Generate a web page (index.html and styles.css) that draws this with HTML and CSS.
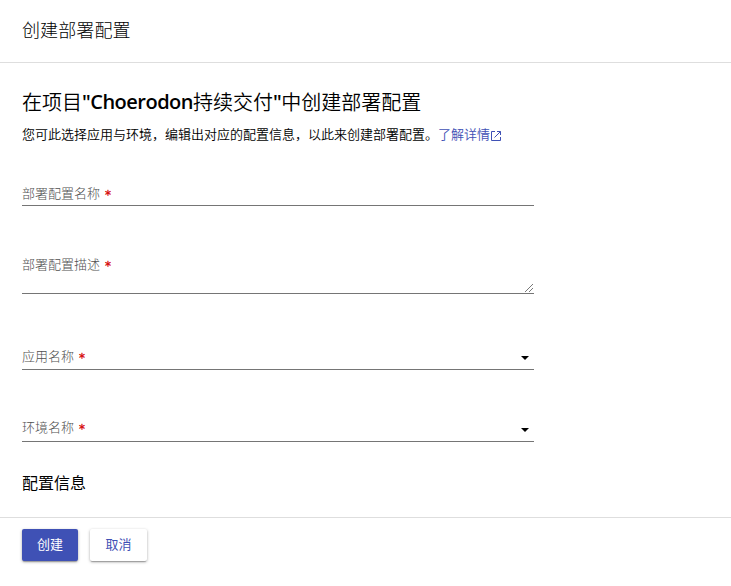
FILE: index.html
```html
<!DOCTYPE html>
<html lang="zh-CN">
<head>
<meta charset="utf-8">
<title>创建部署配置</title>
<link rel="stylesheet" href="styles.css">
</head>
<body>
<div class="drawer">
  <header class="header">创建部署配置</header>
  <main class="content">
    <h2 class="title"><span>在项目</span><span class="latin">"Choerodon</span><span>持续交付</span><span class="latin">"</span><span>中创建部署配置</span></h2>
    <p class="desc"><span>您可此选择应用与环境，编辑出对应的配置信息，以此来创建部署配置。</span><a class="link">了解详情<svg class="open" viewBox="0 0 12 12"><path d="M5 1.5H1.5v9h9V7M7 1.5h3.5V5M10.5 1.5L4.5 7.5"/></svg></a></p>
    <div class="field name"><span>部署配置名称</span><i class="star">*</i></div>
    <div class="field area"><span>部署配置描述</span><i class="star">*</i><svg class="grip" viewBox="0 0 10 10"><path d="M1 9L9 1M5 9l4-4"/></svg></div>
    <div class="field app"><span>应用名称</span><i class="star">*</i><i class="caret"></i></div>
    <div class="field env"><span>环境名称</span><i class="star">*</i><i class="caret"></i></div>
    <h3 class="section">配置信息</h3>
  </main>
  <footer class="footer"><button class="btn primary">创建</button><button class="btn">取消</button></footer>
</div>
</body>
</html>
```
FILE: styles.css
```css
* { box-sizing: border-box; }
body { margin: 0; background: #fff; color: #000; font: 13px/20px "Noto Sans CJK SC", sans-serif; }
.drawer { height: 586px; display: flex; flex-direction: column; overflow: hidden; white-space: nowrap; }
.header { height: 63px; padding: 0 22px; border-bottom: 1px solid #dedede; font-size: 18px; line-height: 59px; color: #000; font-weight: 300; letter-spacing: .1px; }
.content { flex: 1; padding: 25px 22px 0; }
.title { display: flex; margin: 0; height: 28px; font: 350 20px/28px "Noto Sans CJK SC", sans-serif; }
.latin { font-family: "Open Sans", sans-serif; font-weight: 600; letter-spacing: -.5px; }
.desc { display: flex; margin: 8px 0 0; height: 20px; font-weight: 350; }
.link { display: flex; align-items: center; color: #3f51b5; }
.open { width: 12px; height: 12px; margin-top: 3px; fill: none; stroke: #3f51b5; }
.field { display: flex; width: 512px; border-bottom: 1px solid #757575; color: #505050; font-weight: 300; }
.star { margin: 2px 0 0 5px; color: #d50000; font: 400 12px/20px "DejaVu Sans", sans-serif; -webkit-text-stroke: .3px #d50000; }
.name { height: 23px; margin-top: 39px; }
.area { height: 40px; margin-top: 48px; }
.app { height: 24px; margin-top: 52px; }
.env { height: 25px; margin-top: 47px; }
.grip { width: 10px; height: 10px; margin: auto 0 0 auto; fill: none; stroke: #555; stroke-width: .8; }
.caret { margin: 10px 5px 0 auto; width: 0; height: 0; border: 4px solid transparent; border-top-color: #000; border-bottom: 0; }
.env .caret { margin-top: 11px; }
.section { margin: 28px 0 0; font: 400 16px/24px "Noto Sans CJK SC", sans-serif; }
.footer { display: flex; gap: 12px; height: 69px; padding: 11px 22px; border-top: 1px solid #dedede; }
.btn { height: 32px; width: 57px; padding: 0 0 2px; border: 0; border-radius: 2px; background: #fff; color: #3f51b5; font: 400 13px/30px "Noto Sans CJK SC", sans-serif; box-shadow: 0 1px 3px rgba(0,0,0,.35), 0 2px 1px -1px rgba(0,0,0,.2); }
.primary { width: 56px; background: #3f51b5; color: #fff; }
```
